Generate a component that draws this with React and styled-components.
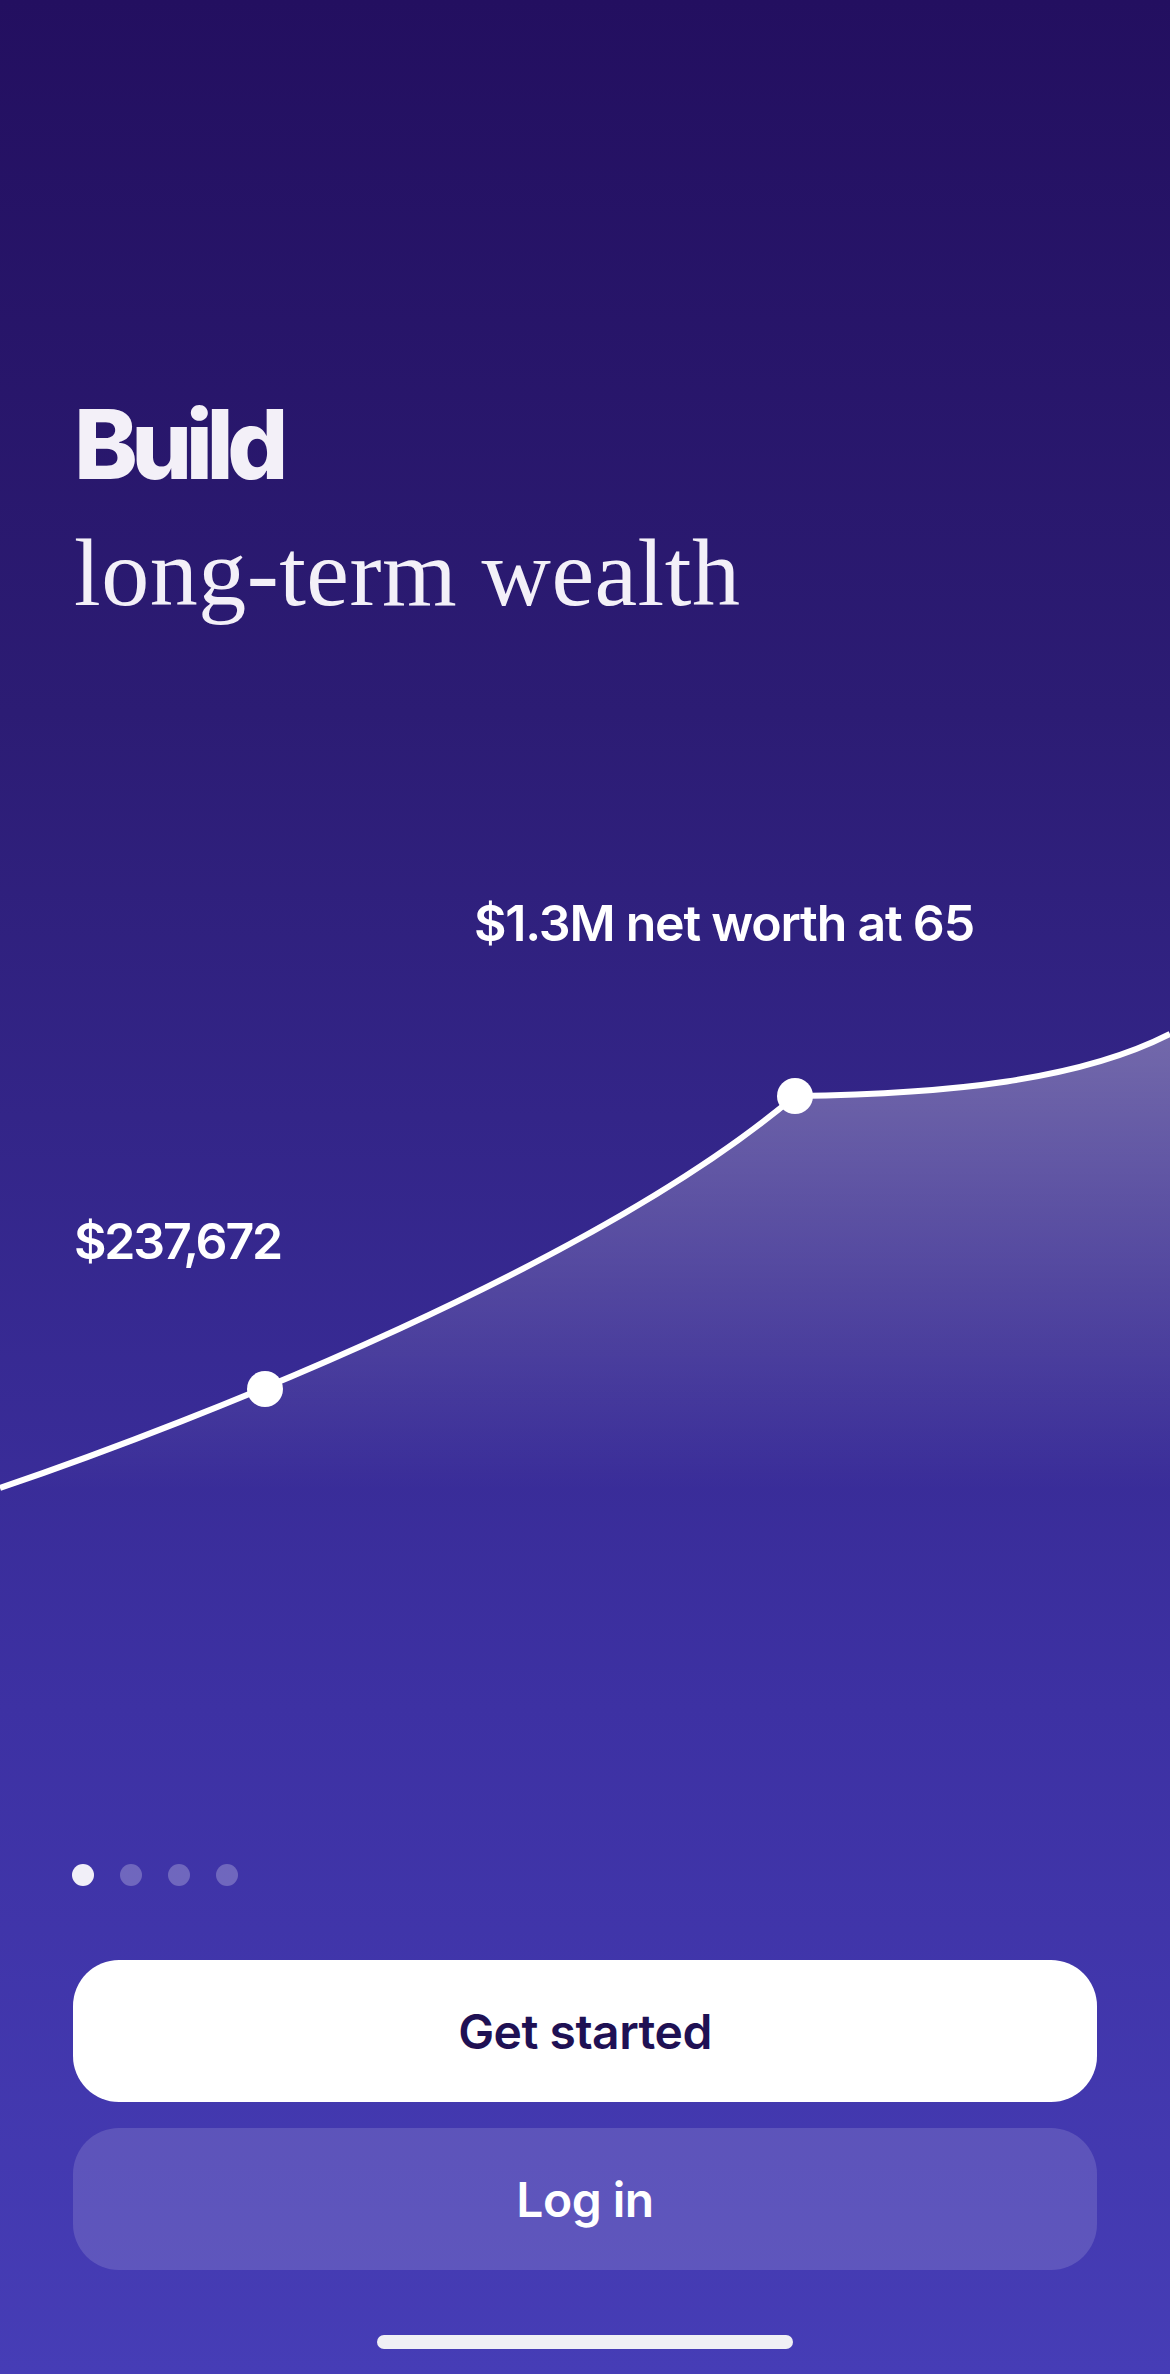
import React from "react";
import styled, { createGlobalStyle } from "styled-components";

const GlobalStyle = createGlobalStyle`
  html, body {
    margin: 0;
    padding: 0;
    background: #231060;
  }
  * {
    box-sizing: border-box;
  }
`;

const Screen = styled.div`
  width: 1170px;
  height: 2374px;
  display: flex;
  flex-direction: column;
  overflow: hidden;
  font-family: Inter, "Noto Sans", sans-serif;
  color: #fff;
  background: linear-gradient(
    180deg,
    #230f60 0%,
    #2c1c74 30%,
    #332588 47%,
    #3d31a3 72%,
    #463db6 100%
  );
`;

const Heading = styled.div`
  display: flex;
  flex-direction: column;
  padding: 396px 74px 0;
`;

const HeadingBold = styled.h1`
  margin: 0;
  font-size: 96px;
  line-height: 96px;
  font-weight: 800;
  letter-spacing: -6.5px;
  color: #f3f0f8;
`;

const HeadingSerif = styled.h2`
  margin: 33px 0 0;
  font-family: "Liberation Serif", "DejaVu Serif", serif;
  font-size: 96px;
  line-height: 96px;
  font-weight: 400;
  letter-spacing: 0.5px;
  color: #f3f0f8;
`;

const Chart = styled.div`
  position: relative;
  height: 680px;
  margin-top: 259px;

  svg {
    position: absolute;
    inset: 0;
  }
`;

const ChartLabel = styled.span`
  position: absolute;
  left: ${(p) => p.$x}px;
  top: ${(p) => p.$y}px;
  font-size: 50px;
  line-height: 50px;
  font-weight: 600;
  letter-spacing: ${(p) => (p.$tight ? "-2.2px" : "-1.2px")};
  white-space: nowrap;
  color: #fff;
`;

const Pager = styled.div`
  display: flex;
  gap: 26px;
  padding: 0 72px;
  margin-top: 304px;
`;

const PagerDot = styled.span`
  width: 22px;
  height: 22px;
  border-radius: 50%;
  background: ${(p) => (p.$active ? "#f1eff8" : "rgba(255, 255, 255, 0.25)")};
`;

const Actions = styled.div`
  display: flex;
  flex-direction: column;
  gap: 26px;
  padding: 0 73px;
  margin-top: 74px;
`;

const Button = styled.button`
  height: 142px;
  width: 100%;
  border: none;
  border-radius: 46px;
  font-family: Inter, "Noto Sans", sans-serif;
  font-size: 48px;
  font-weight: 600;
  letter-spacing: -0.5px;
  background: ${(p) => (p.$primary ? "#ffffff" : "rgba(255, 255, 255, 0.14)")};
  color: ${(p) => (p.$primary ? "#1f1154" : "#ffffff")};
`;

const HomeBar = styled.div`
  align-self: center;
  width: 416px;
  height: 14px;
  border-radius: 7px;
  background: #f0f0f5;
  margin-top: 65px;
`;

function GrowthChart() {
  const line =
    "M0 1488 C 200 1420, 600 1262, 795 1096 C 950 1094, 1080 1080, 1170 1034";
  return (
    <svg width="1170" height="680" viewBox="0 880 1170 680">
      <defs>
        <linearGradient
          id="areaFade"
          gradientUnits="userSpaceOnUse"
          x1="0"
          y1="1030"
          x2="0"
          y2="1490"
        >
          <stop offset="0" stopColor="#ffffff" stopOpacity="0.32" />
          <stop offset="1" stopColor="#ffffff" stopOpacity="0" />
        </linearGradient>
      </defs>
      <path d={`${line} L1170 1560 L0 1560 Z`} fill="url(#areaFade)" />
      <path d={line} fill="none" stroke="#ffffff" strokeWidth="6" />
      <circle cx="265" cy="1389" r="18" fill="#ffffff" />
      <circle cx="795" cy="1096" r="18" fill="#ffffff" />
    </svg>
  );
}

export default function App() {
  const pages = [0, 1, 2, 3];
  return (
    <>
      <GlobalStyle />
      <Screen>
        <Heading>
          <HeadingBold>Build</HeadingBold>
          <HeadingSerif>long-term wealth</HeadingSerif>
        </Heading>
        <Chart>
          <GrowthChart />
          <ChartLabel $x={474} $y={18}>
            $1.3M net worth at 65
          </ChartLabel>
          <ChartLabel $x={74} $y={336} $tight>
            $237,672
          </ChartLabel>
        </Chart>
        <Pager>
          {pages.map((i) => (
            <PagerDot key={i} $active={i === 0} />
          ))}
        </Pager>
        <Actions>
          <Button $primary>Get started</Button>
          <Button>Log in</Button>
        </Actions>
        <HomeBar />
      </Screen>
    </>
  );
}
